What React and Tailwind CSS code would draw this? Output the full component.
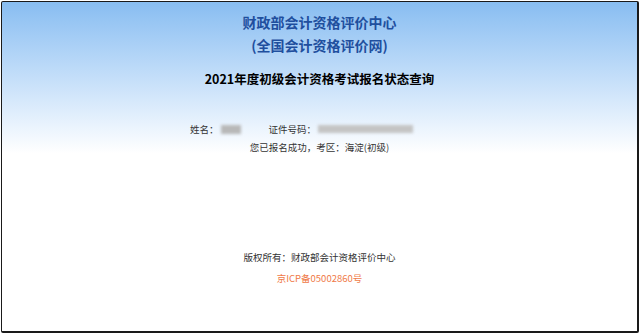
export default function App() {
  return (
    <div className="w-[640px] h-[334px] bg-white p-px font-['Noto_Sans_CJK_SC','Noto_Sans',sans-serif]">
      <div className="h-full rounded-[2px] border border-r-2 border-b-2 border-[#1a1a1a] bg-linear-to-b from-[#88bdf1] to-white to-[46%] flex flex-col items-center">
        <div className="pt-[9px] text-[14px] leading-[23px] font-bold text-[#1f4f9e] text-center">
          <div>财政部会计资格评价中心</div>
          <div>(全国会计资格评价网)</div>
        </div>
        <div className="mt-[12px] text-[12.5px] leading-[20px] font-bold text-black">
          2021年度初级会计资格考试报名状态查询
        </div>
        <div className="mt-[33px] flex items-center pr-[36px] text-[9.5px] leading-[14px] text-[#333]">
          <span>姓名：</span>
          <span className="ml-[2px] w-[20px] h-[9px] bg-[#b8b8b8] blur-[1.5px]"></span>
          <span className="ml-[28px]">证件号码：</span>
          <span className="ml-[2px] w-[95px] h-[8px] bg-[#c4c4c4] blur-[1.5px]"></span>
        </div>
        <div className="mt-[4px] text-[9.5px] leading-[14px] text-[#333]">
          您已报名成功，考区：海淀(初级)
        </div>
        <div className="mt-[96px] text-[9.5px] leading-[14px] text-[#333]">
          版权所有：财政部会计资格评价中心
        </div>
        <div className="mt-[7px] text-[9.5px] leading-[14px] text-[#f07a48]">
          京ICP备05002860号
        </div>
      </div>
    </div>
  );
}
